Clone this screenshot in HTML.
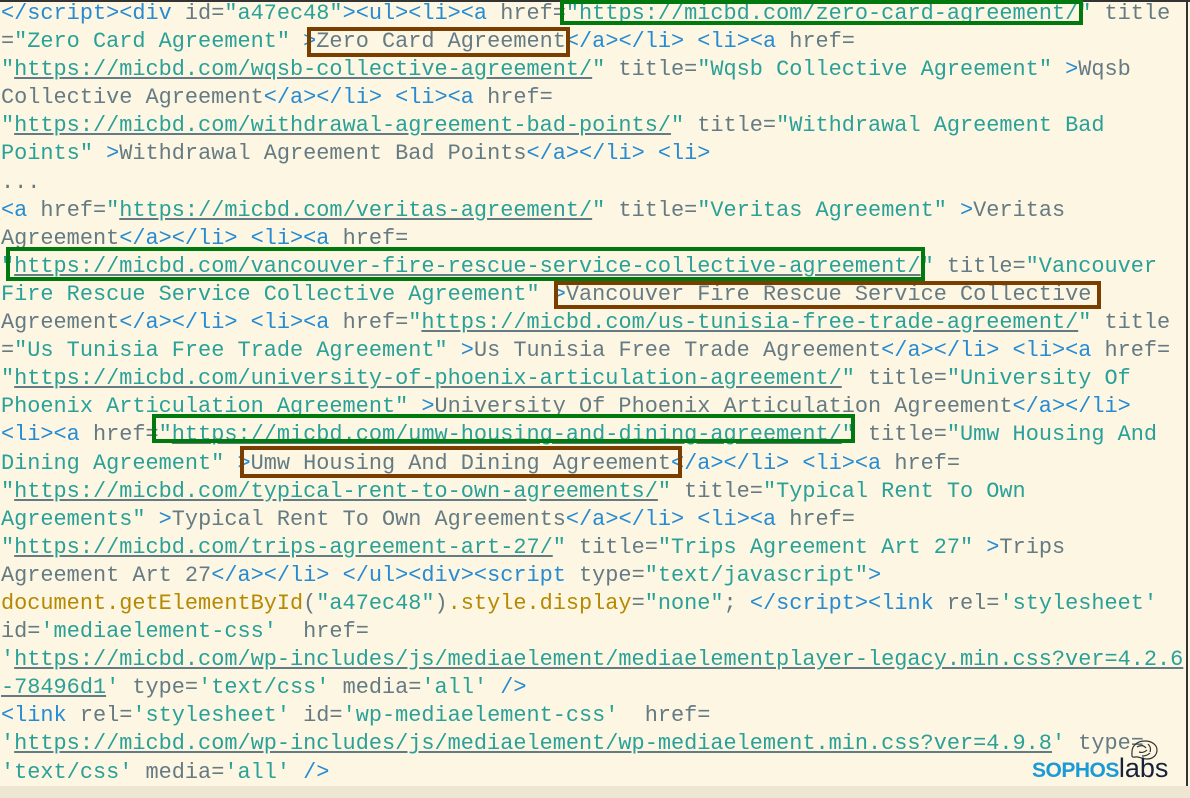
<!DOCTYPE html>
<html><head><meta charset="utf-8"><style>
html,body{margin:0;padding:0}
body{width:1190px;height:798px;background:#fdf6e3;position:relative;overflow:hidden;font-family:"Liberation Mono",monospace;font-size:21.9px;}
.top{position:absolute;left:0;top:0;width:1190px;height:2px;background:#333}
.rt{position:absolute;right:2px;top:0;width:2px;height:786px;background:#333}
.bot{position:absolute;left:0;top:786px;width:1190px;height:12px;background:#ece6d3}
.code{position:absolute;left:1px;top:0px;color:#657b83}
.code div{height:28.1px;line-height:28.1px;white-space:pre}
.t{color:#268bd2}.s{color:#2aa198}.u{color:#2aa198;text-decoration:underline;text-decoration-color:#657b83}.y{color:#b58900}
.g{position:absolute;border:4.5px solid #007a0f;box-sizing:border-box}
.b{position:absolute;border:4.5px solid #7a3f00;box-sizing:border-box}
.logo{position:absolute;left:1032px;top:753px;font-family:"Liberation Sans",sans-serif;font-weight:bold;font-size:21px;color:#1a9ad6;letter-spacing:-0.5px;line-height:30px}
.logo span{color:#16213a;font-weight:normal;font-size:27px;letter-spacing:0}
</style></head><body>
<div class="top"></div><div class="rt"></div><div class="bot"></div>
<div class="code"><div><span class="t">&lt;/script&gt;&lt;div</span> id=<span class="s">"a47ec48"</span><span class="t">&gt;&lt;ul&gt;&lt;li&gt;&lt;a</span> href=<span class="s">"</span><span class="u">https://micbd.com/zero-card-agreement/</span><span class="s">"</span> title</div><div>=<span class="s">"Zero Card Agreement"</span> <span class="t">&gt;</span>Zero Card Agreement<span class="t">&lt;/a&gt;&lt;/li&gt;</span> <span class="t">&lt;li&gt;&lt;a</span> href=</div><div><span class="s">"</span><span class="u">https://micbd.com/wqsb-collective-agreement/</span><span class="s">"</span> title=<span class="s">"Wqsb Collective Agreement"</span> <span class="t">&gt;</span>Wqsb</div><div>Collective Agreement<span class="t">&lt;/a&gt;&lt;/li&gt;</span> <span class="t">&lt;li&gt;&lt;a</span> href=</div><div><span class="s">"</span><span class="u">https://micbd.com/withdrawal-agreement-bad-points/</span><span class="s">"</span> title=<span class="s">"Withdrawal Agreement Bad</span></div><div><span class="s">Points"</span> <span class="t">&gt;</span>Withdrawal Agreement Bad Points<span class="t">&lt;/a&gt;&lt;/li&gt;</span> <span class="t">&lt;li&gt;</span></div><div>...</div><div><span class="t">&lt;a</span> href=<span class="s">"</span><span class="u">https://micbd.com/veritas-agreement/</span><span class="s">"</span> title=<span class="s">"Veritas Agreement"</span> <span class="t">&gt;</span>Veritas</div><div>Agreement<span class="t">&lt;/a&gt;&lt;/li&gt;</span> <span class="t">&lt;li&gt;&lt;a</span> href=</div><div><span class="s">"</span><span class="u">https://micbd.com/vancouver-fire-rescue-service-collective-agreement/</span><span class="s">"</span> title=<span class="s">"Vancouver</span></div><div><span class="s">Fire Rescue Service Collective Agreement"</span> <span class="t">&gt;</span>Vancouver Fire Rescue Service Collective</div><div>Agreement<span class="t">&lt;/a&gt;&lt;/li&gt;</span> <span class="t">&lt;li&gt;&lt;a</span> href=<span class="s">"</span><span class="u">https://micbd.com/us-tunisia-free-trade-agreement/</span><span class="s">"</span> title</div><div>=<span class="s">"Us Tunisia Free Trade Agreement"</span> <span class="t">&gt;</span>Us Tunisia Free Trade Agreement<span class="t">&lt;/a&gt;&lt;/li&gt;</span> <span class="t">&lt;li&gt;&lt;a</span> href=</div><div><span class="s">"</span><span class="u">https://micbd.com/university-of-phoenix-articulation-agreement/</span><span class="s">"</span> title=<span class="s">"University Of</span></div><div><span class="s">Phoenix Articulation Agreement"</span> <span class="t">&gt;</span>University Of Phoenix Articulation Agreement<span class="t">&lt;/a&gt;&lt;/li&gt;</span></div><div><span class="t">&lt;li&gt;&lt;a</span> href=<span class="s">"</span><span class="u">https://micbd.com/umw-housing-and-dining-agreement/</span><span class="s">"</span> title=<span class="s">"Umw Housing And</span></div><div><span class="s">Dining Agreement"</span> <span class="t">&gt;</span>Umw Housing And Dining Agreement<span class="t">&lt;/a&gt;&lt;/li&gt;</span> <span class="t">&lt;li&gt;&lt;a</span> href=</div><div><span class="s">"</span><span class="u">https://micbd.com/typical-rent-to-own-agreements/</span><span class="s">"</span> title=<span class="s">"Typical Rent To Own</span></div><div><span class="s">Agreements"</span> <span class="t">&gt;</span>Typical Rent To Own Agreements<span class="t">&lt;/a&gt;&lt;/li&gt;</span> <span class="t">&lt;li&gt;&lt;a</span> href=</div><div><span class="s">"</span><span class="u">https://micbd.com/trips-agreement-art-27/</span><span class="s">"</span> title=<span class="s">"Trips Agreement Art 27"</span> <span class="t">&gt;</span>Trips</div><div>Agreement Art 27<span class="t">&lt;/a&gt;&lt;/li&gt;</span> <span class="t">&lt;/ul&gt;&lt;div&gt;&lt;script</span> type=<span class="s">"text/javascript"</span><span class="t">&gt;</span></div><div><span class="y">document.getElementById</span>(<span class="s">"a47ec48"</span>)<span class="y">.style.display</span>=<span class="s">"none"</span>; <span class="t">&lt;/script&gt;&lt;link</span> rel=<span class="s">'stylesheet'</span></div><div>id=<span class="s">'mediaelement-css'</span>  href=</div><div><span class="s">'</span><span class="u">https://micbd.com/wp-includes/js/mediaelement/mediaelementplayer-legacy.min.css?ver=4.2.6</span></div><div><span class="u">-78496d1</span><span class="s">'</span> type=<span class="s">'text/css'</span> media=<span class="s">'all'</span> <span class="t">/&gt;</span></div><div><span class="t">&lt;link</span> rel=<span class="s">'stylesheet'</span> id=<span class="s">'wp-mediaelement-css'</span>  href=</div><div><span class="s">'</span><span class="u">https://micbd.com/wp-includes/js/mediaelement/wp-mediaelement.min.css?ver=4.9.8</span><span class="s">'</span> type=</div><div><span class="s">'text/css'</span> media=<span class="s">'all'</span> <span class="t">/&gt;</span></div></div>
<div class="g" style="left:560px;top:0;width:523px;height:25px"></div>
<div class="b" style="left:307px;top:27px;width:263px;height:30px"></div>
<div class="g" style="left:6px;top:247px;width:919px;height:34px"></div>
<div class="b" style="left:554px;top:281px;width:547px;height:28px"></div>
<div class="g" style="left:152px;top:414px;width:703px;height:29px"></div>
<div class="b" style="left:240px;top:446px;width:442px;height:32px"></div>
<svg style="position:absolute;left:1128px;top:738px" width="32" height="24" viewBox="0 0 32 24"><g fill="none" stroke="#333" stroke-width="1.2"><path d="M4 14c0-7 6-11 13-11s12 4 12 9-4 9-10 9-8-3-12-2-3-2-3-5z"/><path d="M9 9c3-2 7-2 9 1M11 14c3 1 6 0 8-2M20 6c2 2 3 5 2 8M14 18c3 0 6-1 8-3"/></g></svg>
<div class="logo">SOPHOS<span>labs</span></div>
</body></html>
